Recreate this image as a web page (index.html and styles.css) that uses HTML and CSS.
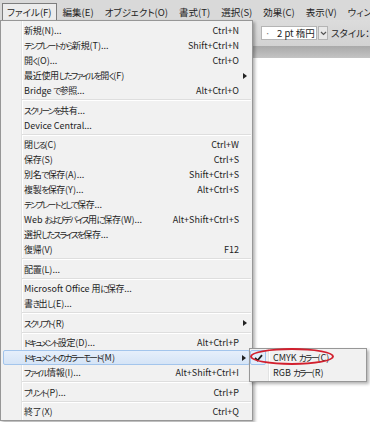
FILE: index.html
```html
<!DOCTYPE html>
<html lang="ja">
<head>
<meta charset="UTF-8">
<meta name="viewport" content="width=device-width, initial-scale=1.0">
<title>ファイル メニュー</title>
<link rel="stylesheet" href="styles.css">
</head>
<body>
<div class="app">
    <div class="menubar">
        <span class="top-item active">ファイル(F)</span>
        <span class="top-item">編集(E)</span>
        <span class="top-item">オブジェクト(O)</span>
        <span class="top-item">書式(T)</span>
        <span class="top-item">選択(S)</span>
        <span class="top-item">効果(C)</span>
        <span class="top-item">表示(V)</span>
        <span class="top-item">ウィンドウ(W)</span>
    </div>

    <!-- control bar, mostly hidden behind the open menu -->
    <div class="toolbar">
        <div class="combo">
            <span class="combo-value"><span class="dot">·</span>2 pt 楕円</span>
            <span class="combo-btn">
                <svg width="7" height="5" viewBox="0 0 7 5"><path d="M1 1 L3.5 3.5 L6 1" fill="none" stroke="#555" stroke-width="1.2"/></svg>
            </span>
        </div>
        <span class="tool-label">スタイル：</span>
    </div>
    <div class="band"></div>
    <div class="canvas"></div>

    <!-- j = kanji run, k = kana run (kana are set narrower, like Meiryo UI) -->
    <div class="menu file-menu">
        <div class="item"><span class="label"><span class="j">新規</span>(N)...</span><span class="key">Ctrl+N</span><span></span></div>
        <div class="item"><span class="label"><span class="k">テンプレートから</span><span class="j">新規</span>(T)...</span><span class="key">Shift+Ctrl+N</span><span></span></div>
        <div class="item"><span class="label"><span class="j">開</span><span class="k">く</span>(O)...</span><span class="key">Ctrl+O</span><span></span></div>
        <div class="item"><span class="label"><span class="j">最近使用</span><span class="k">したファイルを</span><span class="j">開</span><span class="k">く</span>(F)</span><span class="key"></span><span class="arrow"></span></div>
        <div class="item"><span class="label">Bridge <span class="k">で</span><span class="j">参照</span>...</span><span class="key">Alt+Ctrl+O</span><span></span></div>
        <div class="sep"></div>
        <div class="item"><span class="label"><span class="k">スクリーンを</span><span class="j">共有</span>...</span><span class="key"></span><span></span></div>
        <div class="item"><span class="label">Device Central...</span><span class="key"></span><span></span></div>
        <div class="sep"></div>
        <div class="item"><span class="label"><span class="j">閉</span><span class="k">じる</span>(C)</span><span class="key">Ctrl+W</span><span></span></div>
        <div class="item"><span class="label"><span class="j">保存</span>(S)</span><span class="key">Ctrl+S</span><span></span></div>
        <div class="item"><span class="label"><span class="j">別名</span><span class="k">で</span><span class="j">保存</span>(A)...</span><span class="key">Shift+Ctrl+S</span><span></span></div>
        <div class="item"><span class="label"><span class="j">複製</span><span class="k">を</span><span class="j">保存</span>(Y)...</span><span class="key">Alt+Ctrl+S</span><span></span></div>
        <div class="item"><span class="label"><span class="k">テンプレートとして</span><span class="j">保存</span>...</span><span class="key"></span><span></span></div>
        <div class="item"><span class="label">Web <span class="k">およびデバイス</span><span class="j">用</span><span class="k">に</span><span class="j">保存</span>(W)...</span><span class="key">Alt+Shift+Ctrl+S</span><span></span></div>
        <div class="item"><span class="label"><span class="j">選択</span><span class="k">したスライスを</span><span class="j">保存</span>...</span><span class="key"></span><span></span></div>
        <div class="item"><span class="label"><span class="j">復帰</span>(V)</span><span class="key">F12</span><span></span></div>
        <div class="sep"></div>
        <div class="item"><span class="label"><span class="j">配置</span>(L)...</span><span class="key"></span><span></span></div>
        <div class="sep"></div>
        <div class="item"><span class="label">Microsoft Office <span class="j">用</span><span class="k">に</span><span class="j">保存</span>...</span><span class="key"></span><span></span></div>
        <div class="item"><span class="label"><span class="j">書</span><span class="k">き</span><span class="j">出</span><span class="k">し</span>(E)...</span><span class="key"></span><span></span></div>
        <div class="sep"></div>
        <div class="item"><span class="label"><span class="k">スクリプト</span>(R)</span><span class="key"></span><span class="arrow"></span></div>
        <div class="sep"></div>
        <div class="item"><span class="label"><span class="k">ドキュメント</span><span class="j">設定</span>(D)...</span><span class="key">Alt+Ctrl+P</span><span></span></div>
        <div class="item hot"><span class="label"><span class="k">ドキュメントのカラーモード</span>(M)</span><span class="key"></span><span class="arrow"></span></div>
        <div class="item"><span class="label"><span class="k">ファイル</span><span class="j">情報</span>(I)...</span><span class="key">Alt+Shift+Ctrl+I</span><span></span></div>
        <div class="sep"></div>
        <div class="item"><span class="label"><span class="k">プリント</span>(P)...</span><span class="key">Ctrl+P</span><span></span></div>
        <div class="sep"></div>
        <div class="item"><span class="label"><span class="j">終了</span>(X)</span><span class="key">Ctrl+Q</span><span></span></div>
    </div>

    <div class="menu submenu">
        <div class="sub-item">
            <span class="check">
                <svg width="9" height="8" viewBox="0 0 9 8"><path d="M1 4 L3.5 6.5 L8 1.2" fill="none" stroke="#1a1a1a" stroke-width="1.8"/></svg>
            </span>
            <span class="label">CMYK <span class="k">カラー</span>(C)</span>
        </div>
        <div class="sub-item">
            <span></span>
            <span class="label">RGB <span class="k">カラー</span>(R)</span>
        </div>
    </div>

    <div class="mark"></div>
</div>
</body>
</html>
```

FILE: styles.css
```css
body {
    margin: 0;
}
.app {
    position: relative;
    width: 370px;
    height: 422px;
    overflow: hidden;
    display: flex;
    flex-direction: column;
    background: #fff;
    font-family: "Noto Sans CJK JP", sans-serif;
    font-feature-settings: "palt";
    font-size: 9px;
    color: #1e1e1e;
}
.j {
    letter-spacing: -0.3px;
}
.k {
    font-size: 8.5px;
    letter-spacing: -1.6px;
}
.menubar {
    height: 20px;
    flex: none;
    display: flex;
    align-items: flex-end;
    gap: 1px;
    padding-left: 2px;
    background: #d9d9d9;
    font-size: 9.5px;
    white-space: nowrap;
}
.top-item {
    height: 16px;
    line-height: 16px;
    padding: 0 4px;
    border: 1px solid transparent;
    border-bottom: none;
}
.top-item.active {
    border-color: #7d7d7d;
    background: #ececec;
}
.toolbar {
    height: 26px;
    flex: none;
    display: flex;
    align-items: center;
    padding-left: 261px;
    background: linear-gradient(#dcdcdc, #d2d2d2);
    font-size: 9.5px;
    white-space: nowrap;
}
.combo {
    display: flex;
    height: 14px;
}
.combo-value {
    width: 56px;
    box-sizing: border-box;
    border: 1px solid #b4b4b4;
    background: #fff;
    line-height: 12px;
    padding-left: 3px;
}
.dot {
    display: inline-block;
    width: 12px;
    color: #777;
}
.combo-btn {
    width: 8px;
    margin-left: 1px;
    display: flex;
    align-items: center;
    justify-content: center;
    background: #e8e8e8;
    border: 1px solid #b4b4b4;
}
.tool-label {
    margin-left: 3px;
}
.band {
    height: 12px;
    flex: none;
    background: linear-gradient(#a9a9a9, #c4c4c4);
}
.canvas {
    flex: 1;
    background: #fff;
}

.menu {
    position: absolute;
    box-sizing: border-box;
    border: 1px solid #979797;
    box-shadow: 2px 2px 3px rgba(0, 0, 0, 0.3);
    white-space: nowrap;
}
.file-menu {
    left: 0;
    top: 20px;
    width: 253px;
    padding: 2px 0 1px;
    background: linear-gradient(to right, #f1f1f1 20px, #e2e3e3 20px, #e2e3e3 21px, #fff 21px, #fff 22px, #f1f1f1 22px);
}
.item {
    display: grid;
    grid-template-columns: 1fr auto 11px;
    height: 15px;
    line-height: 15px;
    margin: 0 2px;
    padding-left: 21px;
}
.item.hot {
    box-sizing: border-box;
    line-height: 13px;
    padding-left: 20px;
    border: 1px solid #a3c5ec;
    border-radius: 2px;
    background: linear-gradient(#e6effb, #d5e4f6);
}
.key {
    text-align: right;
}
.arrow {
    align-self: center;
    justify-self: end;
    width: 0;
    height: 0;
    margin-right: 3px;
    border-left: 4px solid #222;
    border-top: 3px solid transparent;
    border-bottom: 3px solid transparent;
}
.sep {
    border-top: 1px solid #dedede;
    border-bottom: 1px solid #fff;
    margin: 1px 1px 1.5px 21px;
}

.submenu {
    left: 249px;
    top: 348px;
    width: 118px;
    padding: 1px 0;
    background: linear-gradient(to right, #f1f1f1 18px, #e2e3e3 18px, #e2e3e3 19px, #fff 19px, #fff 20px, #f1f1f1 20px);
}
.sub-item {
    display: grid;
    grid-template-columns: 16px 1fr;
    column-gap: 7px;
    height: 15px;
    line-height: 15px;
}
.check {
    box-sizing: border-box;
    display: flex;
    align-items: center;
    justify-content: center;
    border: 1px solid #9fc3ee;
    border-radius: 2px;
    background: #e2edfb;
}
.mark {
    position: absolute;
    left: 250px;
    top: 348px;
    width: 84px;
    height: 17px;
    box-sizing: border-box;
    border: 2px solid #d21f2d;
    border-radius: 50%;
}
```
